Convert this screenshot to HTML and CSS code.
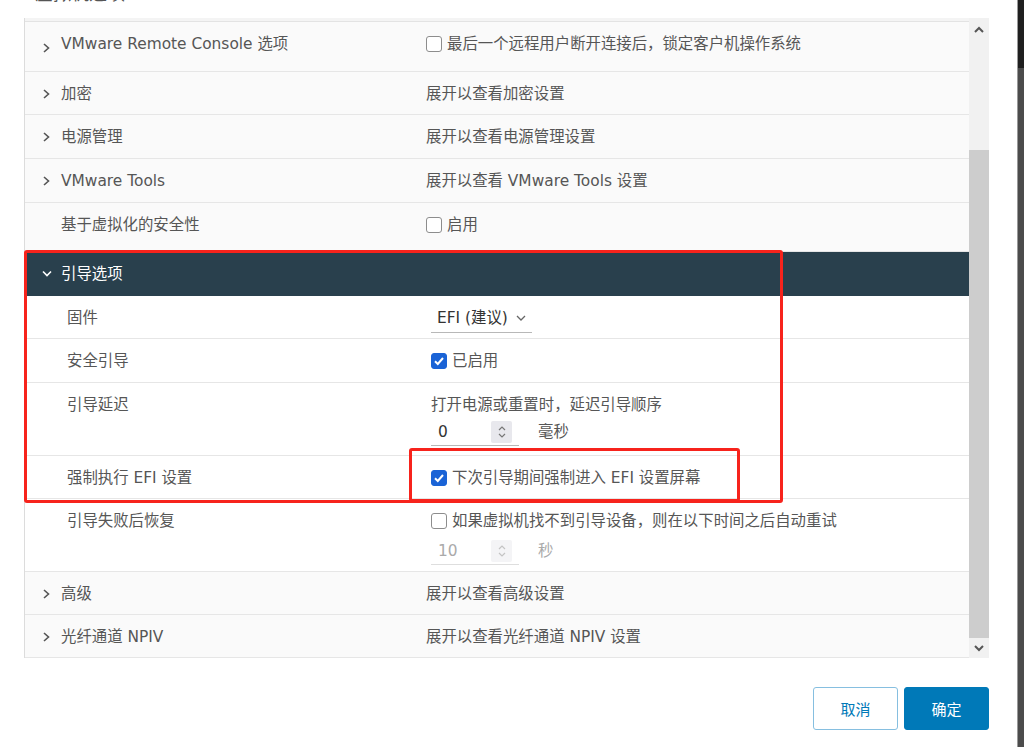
FILE: index.html
```html
<!DOCTYPE html>
<html lang="zh-CN">
<head>
    <meta charset="UTF-8">
    <title>编辑设置</title>
    <link rel="stylesheet" href="styles.css">
</head>
<body>
    <div class="dialog">
        <div class="title">虚拟机选项</div>
        <div class="panel">
            <div class="list">
                <div class="list-top"></div>

                <div class="row h50">
                    <div class="label"><svg class="chev" width="8" height="20" viewBox="0 0 8 20"><path d="M2 10 L6.5 14 L2 18" fill="none" stroke="#555" stroke-width="1.6"/></svg>VMware Remote Console 选项</div>
                    <div class="value"><span class="check"><span class="box"></span>最后一个远程用户断开连接后，锁定客户机操作系统</span></div>
                </div>
                <div class="row h43">
                    <div class="label"><svg class="chev" width="8" height="20" viewBox="0 0 8 20"><path d="M2 6 L6.5 10 L2 14" fill="none" stroke="#555" stroke-width="1.6"/></svg>加密</div>
                    <div class="value">展开以查看加密设置</div>
                </div>
                <div class="row">
                    <div class="label"><svg class="chev" width="8" height="20" viewBox="0 0 8 20"><path d="M2 6 L6.5 10 L2 14" fill="none" stroke="#555" stroke-width="1.6"/></svg>电源管理</div>
                    <div class="value">展开以查看电源管理设置</div>
                </div>
                <div class="row">
                    <div class="label"><svg class="chev" width="8" height="20" viewBox="0 0 8 20"><path d="M2 6 L6.5 10 L2 14" fill="none" stroke="#555" stroke-width="1.6"/></svg>VMware Tools</div>
                    <div class="value">展开以查看 VMware Tools 设置</div>
                </div>
                <div class="row h49">
                    <div class="label plain">基于虚拟化的安全性</div>
                    <div class="value"><span class="check"><span class="box"></span>启用</span></div>
                </div>

                <div class="row head">
                    <div class="label"><svg class="chev-down" width="10" height="20" viewBox="0 0 10 20"><path d="M1 7.5 L5 11.5 L9 7.5" fill="none" stroke="#fff" stroke-width="1.6"/></svg>引导选项</div>
                    <div class="value"></div>
                </div>
                <div class="row sub h43">
                    <div class="label">固件</div>
                    <div class="value">
                        <span class="select">EFI (建议)<svg width="10" height="8" viewBox="0 0 10 8"><path d="M1 2 L5 6 L9 2" fill="none" stroke="#666" stroke-width="1.3"/></svg></span>
                    </div>
                </div>
                <div class="row sub">
                    <div class="label">安全引导</div>
                    <div class="value"><span class="check"><span class="box on"><svg width="14" height="14" viewBox="0 0 14 14"><path d="M3 7.2 L5.8 10 L11 4" fill="none" stroke="#fff" stroke-width="2"/></svg></span>已启用</span></div>
                </div>
                <div class="row sub h73">
                    <div class="label">引导延迟</div>
                    <div class="value">
                        <div>打开电源或重置时，延迟引导顺序</div>
                        <div class="num-line">
                            <span class="num">0<span class="spin"><svg width="10" height="16" viewBox="0 0 10 16"><path d="M2 6 L5 3 L8 6 M2 10 L5 13 L8 10" fill="none" stroke="#777" stroke-width="1.2"/></svg></span></span>
                            <span class="unit">毫秒</span>
                        </div>
                    </div>
                </div>
                <div class="row sub h43">
                    <div class="label">强制执行 EFI 设置</div>
                    <div class="value"><span class="check"><span class="box on"><svg width="14" height="14" viewBox="0 0 14 14"><path d="M3 7.2 L5.8 10 L11 4" fill="none" stroke="#fff" stroke-width="2"/></svg></span>下次引导期间强制进入 EFI 设置屏幕</span></div>
                </div>
                <div class="row sub h73">
                    <div class="label">引导失败后恢复</div>
                    <div class="value">
                        <span class="check"><span class="box"></span>如果虚拟机找不到引导设备，则在以下时间之后自动重试</span>
                        <div class="num-line off">
                            <span class="num">10<span class="spin"><svg width="10" height="16" viewBox="0 0 10 16"><path d="M2 6 L5 3 L8 6 M2 10 L5 13 L8 10" fill="none" stroke="#c4c4c4" stroke-width="1.2"/></svg></span></span>
                            <span class="unit">秒</span>
                        </div>
                    </div>
                </div>

                <div class="row h43">
                    <div class="label"><svg class="chev" width="8" height="20" viewBox="0 0 8 20"><path d="M2 6 L6.5 10 L2 14" fill="none" stroke="#555" stroke-width="1.6"/></svg>高级</div>
                    <div class="value">展开以查看高级设置</div>
                </div>
                <div class="row h43">
                    <div class="label"><svg class="chev" width="8" height="20" viewBox="0 0 8 20"><path d="M2 6 L6.5 10 L2 14" fill="none" stroke="#555" stroke-width="1.6"/></svg>光纤通道 NPIV</div>
                    <div class="value">展开以查看光纤通道 NPIV 设置</div>
                </div>
            </div>
            <div class="scrollbar">
                <div class="sb-up"><svg width="10" height="7" viewBox="0 0 10 7"><path d="M1 6 L5 2 L9 6" fill="none" stroke="#555" stroke-width="2"/></svg></div>
                <div class="sb-thumb"></div>
                <div class="sb-down"><svg width="10" height="7" viewBox="0 0 10 7"><path d="M1 1 L5 5 L9 1" fill="none" stroke="#555" stroke-width="2"/></svg></div>
            </div>
        </div>
        <div class="footer">
            <button class="btn btn-outline">取消</button>
            <button class="btn btn-primary">确定</button>
        </div>

        <!-- annotation boxes drawn over the screenshot -->
        <div class="mark mark-big"></div>
        <div class="mark mark-small"></div>
    </div>
    <div class="backdrop"></div>
</body>
</html>
```

FILE: styles.css
```css
body {
    margin: 0;
    display: flex;
    height: 747px;
    overflow: hidden;
    font-family: "DejaVu Sans", "Noto Sans CJK SC", sans-serif;
    font-size: 15.4px;
    color: #565656;
    background-color: #fff;
}

.dialog {
    width: 1017px;
    position: relative;
    background-color: #fff;
}

.backdrop {
    flex: 1;
    border-left: 1px solid #9a9a9a;
    background: linear-gradient(#1f1f1f 0, #1f1f1f 68px, #4c4c4c 68px);
}

.title {
    height: 20px;
    line-height: 20px;
    margin-top: -16px;
    padding-left: 35px;
    font-size: 18px;
    color: #555;
}

.panel {
    display: flex;
    margin: 14px 0 0 24px;
    width: 965px;
    height: 640px;
}

.list {
    flex: 1;
    border-left: 1px solid #dcdcdc;
    background-color: #fafafa;
}

.list-top {
    height: 3px;
    background-color: #f4f4f4;
    border-bottom: 1px solid #e3e3e3;
}

.row {
    display: grid;
    grid-template-columns: 401px 1fr;
    height: 44px;
    box-sizing: border-box;
    border-bottom: 1px solid #e6e6e6;
    background-color: #fafafa;
}

.row.h43 { height: 43px; }
.row.h49 { height: 49px; }
.row.h50 { height: 50px; }
.row.h73 { height: 73px; }

.label,
.value {
    padding-top: 12px;
    line-height: 20px;
    white-space: nowrap;
}

.label {
    display: flex;
    align-items: flex-start;
    padding-left: 17px;
}

.label.plain {
    padding-left: 36px;
}

.chev {
    margin-right: 11px;
    flex: none;
}

.chev-down {
    margin-right: 9px;
    flex: none;
}

.row.head {
    background-color: #29404d;
    color: #fff;
    border-bottom: none;
}

.row.sub {
    background-color: #fff;
}

.row.sub .label {
    padding-left: 42px;
}

.row.sub .value {
    padding-left: 5px;
}

.check {
    display: inline-flex;
    align-items: center;
    gap: 5px;
}

.box {
    width: 16px;
    height: 16px;
    box-sizing: border-box;
    border: 1px solid #8d8d8d;
    border-radius: 3px;
    background-color: #fff;
    display: flex;
    align-items: center;
    justify-content: center;
}

.box.on {
    background-color: #1a63d6;
    border-color: #1a63d6;
}

.select {
    display: inline-flex;
    align-items: center;
    gap: 8px;
    width: 101px;
    height: 24px;
    box-sizing: border-box;
    padding: 0 0 4px 6px;
    border-bottom: 1px solid #b8b8b8;
    color: #333;
}

.num-line {
    display: flex;
    align-items: center;
    margin-top: 3px;
}

.num {
    display: flex;
    align-items: center;
    width: 88px;
    height: 28px;
    box-sizing: border-box;
    padding-left: 7px;
    border-bottom: 1px solid #b8b8b8;
    color: #333;
}

.spin {
    margin-left: auto;
    margin-right: 7px;
    width: 21px;
    height: 22px;
    background-color: #e8e8ed;
    border-radius: 2px;
    display: flex;
    align-items: center;
    justify-content: center;
}

.unit {
    margin-left: 19px;
}

.num-line.off .num {
    color: #aaa;
    border-bottom-color: #dedede;
}

.num-line.off .spin {
    background-color: #f4f4f6;
}

.num-line.off .unit {
    color: #aaa;
}

.scrollbar {
    width: 20px;
    display: flex;
    flex-direction: column;
    background-color: #f1f1f1;
}

.sb-up {
    height: 24px;
    display: flex;
    justify-content: center;
    padding-top: 8px;
    box-sizing: border-box;
    margin-bottom: 108px;
}

.sb-thumb {
    flex: 1;
    background-color: #cdcdcd;
}

.sb-down {
    height: 20px;
    display: flex;
    align-items: center;
    justify-content: center;
}

.footer {
    display: flex;
    justify-content: flex-end;
    gap: 6px;
    margin-top: 29px;
    padding-right: 28px;
}

.btn {
    width: 85px;
    height: 43px;
    box-sizing: border-box;
    border-radius: 3px;
    font-family: "DejaVu Sans", "Noto Sans CJK SC", sans-serif;
    font-size: 15px;
    cursor: pointer;
}

.btn-outline {
    background-color: #fff;
    border: 1px solid #86bfe0;
    color: #0079b8;
}

.btn-primary {
    background-color: #0079b8;
    border: 1px solid #0079b8;
    color: #fff;
}

.mark {
    position: absolute;
    border: 3px solid #f7231c;
    border-radius: 3px;
    box-sizing: border-box;
    pointer-events: none;
}

.mark-big {
    left: 24px;
    top: 250px;
    width: 759px;
    height: 253px;
}

.mark-small {
    left: 409px;
    top: 448px;
    width: 331px;
    height: 54px;
}
```
